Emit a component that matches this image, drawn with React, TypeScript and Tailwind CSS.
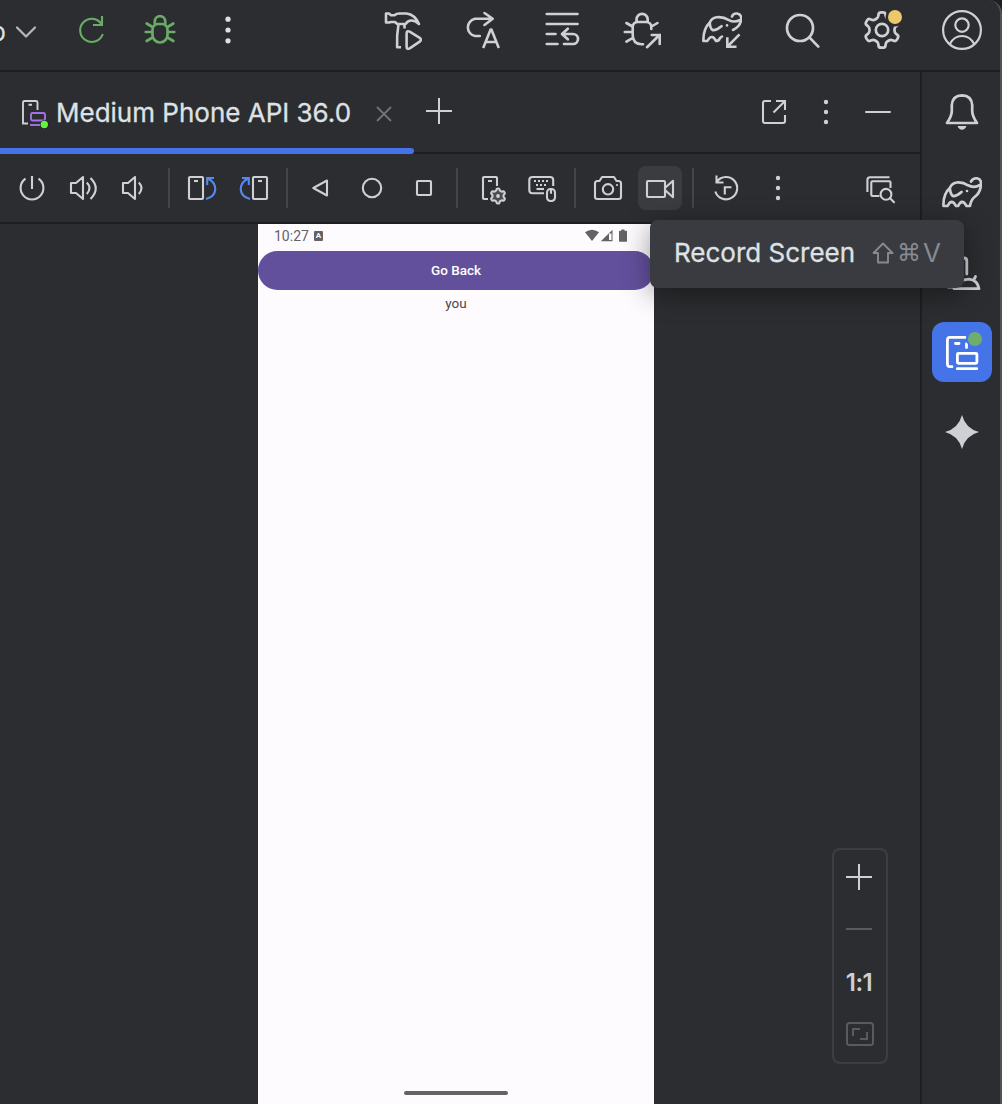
import React from "react";

type IconProps = { size?: 40 | 44; w?: number; className?: string; children: React.ReactNode };

function Icon({ size = 40, w = 2.1, className = "", children }: IconProps) {
  return (
    <svg
      viewBox={`0 0 ${size} ${size}`}
      width={size}
      height={size}
      fill="none"
      stroke="currentColor"
      strokeWidth={w}
      strokeLinecap="round"
      strokeLinejoin="round"
      className={`shrink-0 ${className}`}
    >
      {children}
    </svg>
  );
}

// Gear outline with softened corners: each corner becomes a quadratic curve.
function gearPath(cx: number, cy: number, outer: number, inner: number, teeth = 6) {
  const pts: [number, number][] = [];
  const step = 360 / teeth;
  for (let i = 0; i < teeth; i++) {
    const base = i * step - 90;
    const parts: [number, number][] = [
      [-step * 0.3, inner],
      [-step * 0.17, outer],
      [step * 0.17, outer],
      [step * 0.3, inner],
    ];
    for (const [da, r] of parts) {
      const a = ((base + da) * Math.PI) / 180;
      pts.push([cx + r * Math.cos(a), cy + r * Math.sin(a)]);
    }
  }
  const t = 0.36;
  const toward = (p: [number, number], q: [number, number]) =>
    `${(p[0] + (q[0] - p[0]) * t).toFixed(2)} ${(p[1] + (q[1] - p[1]) * t).toFixed(2)}`;
  const n = pts.length;
  return (
    pts
      .map((p, i) => {
        const prev = pts[(i + n - 1) % n];
        const next = pts[(i + 1) % n];
        return `${i === 0 ? "M" : "L"}${toward(p, prev)}Q${p[0].toFixed(2)} ${p[1].toFixed(2)} ${toward(p, next)}`;
      })
      .join("") + "Z"
  );
}

function Dots({ size, gap, r }: { size: 40 | 44; gap: number; r: number }) {
  const c = size / 2;
  return (
    <Icon size={size}>
      <g fill="currentColor" stroke="none">
        <circle cx={c} cy={c - gap} r={r} />
        <circle cx={c} cy={c} r={r} />
        <circle cx={c} cy={c + gap} r={r} />
      </g>
    </Icon>
  );
}

function Slot({ children }: { children: React.ReactNode }) {
  return <div className="flex h-full w-20 items-center justify-center">{children}</div>;
}

function TopBar() {
  return (
    <header className="flex h-[72px] shrink-0 border-b-2 border-[#1e1f22] text-[#ced0d6]">
      <div className="flex h-[60px] w-full justify-between">
        <div className="flex items-center">
          <div className="flex w-[58px] items-center">
            <span className="flex w-[6px] justify-end overflow-hidden pt-1 text-[26px] leading-[26px] text-[#dfe1e5]">p</span>
            <Icon w={2.2} className="text-[#b4b8bf]">
              <path d="M11 17.5L20 26.5L29 17.5" />
            </Icon>
          </div>
          <div className="flex w-[68px] justify-center text-[#6aab66]">
            <Icon>
              <path strokeLinecap="butt" strokeLinejoin="miter" d="M30.8 24A11.6 11.6 0 1 1 29.8 14.5M30 6V15H21" />
            </Icon>
          </div>
          <div className="flex w-[68px] justify-center text-[#6aab66]">
            <Icon w={2.7}>
              <path d="M14.8 14V11.3A5.2 5.2 0 0 1 25.2 11.3V14M12.5 19.5A5.5 5.5 0 0 1 18 14H22A5.5 5.5 0 0 1 27.5 19.5V25A7.5 7.5 0 0 1 12.5 25ZM6.7 13.5L12.5 17M5.7 22H12M6.7 31L12.5 27.5M33.3 13.5L27.5 17M34.3 22H28M33.3 31L27.5 27.5" />
            </Icon>
          </div>
          <div className="flex w-[68px] justify-center text-[#dfe1e5]">
            <Dots size={40} gap={10.8} r={2.6} />
          </div>
        </div>
        <div className="flex">
          <Slot>
            <Icon w={2.6}>
              <path d="M4 3.5H7L9 5.2H12.500Q14.500 3.500 17.500 3.500H24.500Q33 4.500 37 14Q32.500 10 28.700 10.500Q25.300 11 23.700 14H15.200L13 12H9L7 12.500H4Z" />
              <path d="M16.500 14.200Q14.600 25 15.100 37.200H19M22.500 14.500V18.500" strokeLinecap="butt" />
              <path d="M24.600 23.700Q24.600 20.200 27.700 21.700L37.700 27.800Q40 29.700 37.700 31.600L27.700 38.300Q24.600 39.800 24.600 36.500Z" />
            </Icon>
          </Slot>
          <Slot>
            <Icon w={2.6}>
              <path d="M17.800 26H13A8.750 8.750 0 0 1 13 8.800H30.500M22.500 3L30.700 8.800L22.500 15" />
              <path strokeLinecap="butt" d="M21.200 38L28.600 19.500H29.400L36.800 38M24 32H34" />
            </Icon>
          </Slot>
          <Slot>
            <Icon w={2.7}>
              <path d="M4.800 4H35.500M4.800 14H35.500M4.800 24H13.500M4.800 34H15.500M21 24H31A5 5 0 0 1 31 34H22M25.800 18.700L20 24L25.800 29.300" />
            </Icon>
          </Slot>
          <Slot>
            <Icon w={2.6}>
              <path d="M14.500 11.800V9.500A5.600 5.600 0 0 1 25.700 9.500V11.800M29.300 19V17.500Q29.300 12 24 12H16Q10.700 12 10.700 17.500V25Q10.700 33.800 19.500 34.300H21M4.400 13L10.500 16.500M2.800 22H10M4.400 31.700L10.500 28.200M35.500 13L29.500 16.500" />
              <path strokeLinejoin="miter" d="M25 37.200L37.500 25M29.800 25H37.700V34" />
            </Icon>
          </Slot>
          <Slot>
            <Icon w={2.6}>
              <path d="M30 6.500Q31 3.200 35 3.500Q39.500 4.200 39.200 9Q38.700 16 31 20M38.300 10Q32 13 27 10.200Q21 6.500 14.500 7.300Q9.500 8.200 7.800 12.500Q1 19 1.400 31H5.200L7.500 28Q10 26 12 28L14 31Q17 31 18 28L20 26.500M7.800 12.500Q8 19 11 20.300Q15 20 19.500 16.200" />
              <circle cx="25" cy="15.400" r="1.300" fill="currentColor" stroke="none" />
              <path strokeLinejoin="miter" strokeLinecap="butt" d="M37.500 24.300L25.500 36.500M25.300 27.300V36.700H34.500" />
            </Icon>
          </Slot>
          <Slot>
            <Icon w={2.700}>
              <circle cx="18" cy="18" r="13" />
              <path d="M27.400 27.400L36.300 36.600" />
            </Icon>
          </Slot>
          <Slot>
            <Icon w={2.700}>
              <path d={gearPath(20, 20, 18, 12.8)} />
              <circle cx="20" cy="20" r="6.200" />
              <circle cx="33" cy="7" r="9.500" fill="#2b2d30" stroke="none" />
              <circle cx="33" cy="7" r="7" fill="#edc76b" stroke="none" />
            </Icon>
          </Slot>
          <Slot>
            <Icon w={2.200}>
              <circle cx="20" cy="20" r="18.900" />
              <circle cx="20" cy="15.100" r="6.700" />
              <path d="M7.800 34Q12 26 20 26T32.200 34" />
            </Icon>
          </Slot>
        </div>
      </div>
    </header>
  );
}

function TabBar() {
  return (
    <div className="relative flex h-[82px] shrink-0 items-start justify-between border-b-2 border-[#1e1f22] text-[#ced0d6]">
      <div className="flex h-20 items-center">
        <div className="flex w-[413px] items-center pl-5">
          <svg width="30" height="32" viewBox="0 0 30 32" fill="none" strokeWidth="1.900" className="mt-0.5 shrink-0">
            <path d="M8 26.500H3V5.500Q3 4 4.500 4H16Q17.500 4 17.500 5.500V13M8.500 7.800H12" stroke="#ced0d6" />
            <rect x="11" y="16" width="14" height="7.500" rx="1.500" stroke="#a571e6" />
            <path d="M10 28H21" stroke="#a571e6" />
            <circle cx="24.300" cy="27.500" r="4.300" fill="#1e1f22" />
            <circle cx="24.300" cy="27.500" r="3.700" fill="#62f540" />
          </svg>
          <span className="ml-1.5 mt-0.5 w-[320px] whitespace-nowrap text-[26px] leading-8 text-[#dfe1e5] [-webkit-text-stroke:0.3px_#dfe1e5]">
            Medium Phone API 36.0
          </span>
          <svg width="16" height="16" viewBox="0 0 16 16" stroke="#6f737a" strokeWidth="1.800" className="mt-1 shrink-0">
            <path d="M1 1L15 15M15 1L1 15" />
          </svg>
        </div>
        <svg width="26" height="26" viewBox="0 0 26 26" stroke="currentColor" strokeWidth="2" className="-mt-0.5 ml-[13px]">
          <path d="M0 13H26M13 0V26" />
        </svg>
      </div>
      <div className="flex h-20 items-center gap-2 pr-5">
        <Icon size={44}>
          <path strokeLinecap="butt" strokeLinejoin="miter" d="M19 11H13Q11 11 11 13V31Q11 33 13 33H31Q33 33 33 31V25M24 11H33V20M33 11L21.500 22.500" />
        </Icon>
        <Dots size={44} gap={10} r={2.2} />
        <Icon size={44}>
          <path d="M10 22H34" />
        </Icon>
      </div>
      <div className="absolute -bottom-0.5 left-0 h-1.5 w-[414px] rounded-r-full bg-[#4573e8]" />
    </div>
  );
}

function Divider() {
  return <div className="mx-[10px] h-10 w-0.5 bg-[#43454a]" />;
}

function Toolbar() {
  return (
    <div className="flex h-[70px] shrink-0 items-center justify-between border-b-2 border-[#1e1f22] pl-[10px] pr-[18px] text-[#ced0d6]">
      <div className="flex items-center">
        <div className="flex gap-2">
          <Icon size={44}>
            <path strokeLinecap="butt" d="M15.500 12.700A11.400 11.400 0 1 0 28.500 12.700M22 10V23" />
          </Icon>
          <Icon size={44}>
            <path strokeLinecap="butt" d="M9 17H14L21 11V33L14 27H9ZM24.800 16.500Q30.200 22 24.800 28M28.500 12Q39 22.500 28.500 33" />
          </Icon>
          <Icon size={44}>
            <path strokeLinecap="butt" d="M9 17H14L21 11V33L14 27H9ZM24.800 16.500Q30.200 22 24.800 28" />
          </Icon>
        </div>
        <Divider />
        <div className="flex gap-2">
          <Icon size={44}>
            <rect x="9" y="11" width="14" height="22" rx="1" />
            <path strokeLinecap="butt" d="M14 15H18" />
            <path stroke="#5788f0" strokeLinecap="butt" strokeLinejoin="miter" d="M34 12H27.200V19M28 12.500C38 18 38 30 26 33" />
          </Icon>
          <Icon size={44}>
            <rect x="21" y="11" width="14" height="22" rx="1" />
            <path strokeLinecap="butt" d="M26 15H30" />
            <path stroke="#5788f0" strokeLinecap="butt" strokeLinejoin="miter" d="M10 12H16.800V19M16 12.500C6 18 6 30 18 33" />
          </Icon>
        </div>
        <Divider />
        <div className="flex gap-2">
          <Icon size={44}>
            <path d="M15.300 22L29 14.500V29.500Z" />
          </Icon>
          <Icon size={44}>
            <circle cx="22" cy="22" r="9.200" />
          </Icon>
          <Icon size={44}>
            <rect x="15" y="15" width="14" height="14" rx="1" />
          </Icon>
        </div>
        <Divider />
        <div className="flex gap-2">
          <Icon size={44}>
            <path strokeLinecap="butt" d="M20 33H16Q15 33 15 32V12Q15 11 16 11H28Q29 11 29 12V20M20 15H24" />
            <path d={gearPath(30, 30, 7.6, 5.6)} fill="#4a4c50" />
            <circle cx="30" cy="30" r="1.900" fill="currentColor" stroke="none" />
          </Icon>
          <Icon size={44}>
            <path strokeLinecap="butt" d="M24 27.300H12.500Q9.300 27.300 9.300 24V14Q9.300 11 12.500 11H30Q33.200 11 33.200 14V20" />
            <path strokeLinecap="butt" strokeDasharray="2 2" d="M14 15H28M16 19H27" />
            <path strokeLinecap="butt" d="M16.500 23H24" />
            <rect x="27" y="23" width="8" height="12" rx="3.500" />
            <path d="M31 23V27" />
          </Icon>
        </div>
        <Divider />
        <div className="flex gap-2">
          <Icon size={44}>
            <path d="M9 17.500Q9 15 11.500 15H13.500L16 11H28L30.500 15H32.500Q35 15 35 17.500V31Q35 33 32.500 33H11.500Q9 33 9 31Z" />
            <circle cx="22" cy="23.300" r="5.200" />
            <circle cx="31" cy="19" r="1.100" fill="currentColor" stroke="none" />
          </Icon>
          <div className="rounded-lg bg-[#3b3c40]">
            <Icon size={44}>
              <rect x="9" y="15" width="18" height="16" rx="1" />
              <path d="M27.500 21.500L35 14.800V31.200L27.500 24.500" />
            </Icon>
          </div>
        </div>
        <Divider />
        <div className="flex gap-2">
          <Icon size={44}>
            <path strokeLinecap="butt" strokeLinejoin="miter" d="M11.300 25.500A11.200 11.200 0 1 0 13 15.500M12.500 9.500V16.500H19.500" />
            <path strokeLinecap="butt" strokeLinejoin="miter" d="M20.800 28.500V21.300H27.500" />
          </Icon>
          <Dots size={44} gap={10} r={2.2} />
        </div>
      </div>
      <Icon size={44}>
        <path strokeLinecap="butt" d="M9.400 26V14Q9.400 11.300 12 11.300H31.500M21.500 30H14.500Q13.300 30 13.300 29V16.500Q13.300 15.300 14.500 15.300H31.500Q32.500 15.300 32.500 16.500V22" />
        <circle cx="28" cy="28.300" r="5.400" />
        <path d="M32 32.300L36 36.300" />
      </Icon>
    </div>
  );
}

function PhoneScreen() {
  return (
    <div className="ml-[258px] flex w-[396px] flex-col bg-[#fefbff] font-[Roboto,sans-serif]">
      <div className="flex h-[27px] items-center pb-1 pl-4 pr-[26px] text-[#646267]">
        <span className="w-10 text-[14px] leading-4">10:27</span>
        <span className="flex h-[10px] w-[9px] items-center justify-center rounded-[1px] bg-[#646267] text-[8px] font-bold leading-none text-white">A</span>
        <svg width="43" height="13" viewBox="0 0 43 13" fill="currentColor" className="ml-auto">
          <path d="M0 3.300Q7 -1.700 14 3.300L7 12Z" />
          <path fillRule="evenodd" d="M27.500 .8V12.200H15.800ZM26.500 4.500H24V11H26.500Z" />
          <path d="M36.300 1.800V.5H39.500V1.800H41.200Q42 1.800 42 2.600V12Q42 12.700 41.200 12.700H34.800Q34 12.700 34 12V2.600Q34 1.800 34.800 1.800Z" />
        </svg>
      </div>
      <button className="h-[39px] w-full rounded-full bg-[#63509d] text-[13.500px] font-medium text-white">Go Back</button>
      <p className="mt-[3px] text-center text-[13.500px] leading-5 text-[#47454b]">you</p>
      <div className="mx-auto mb-[9px] mt-auto h-1 w-[104px] rounded-full bg-[#646267]" />
    </div>
  );
}

function ZoomControls() {
  return (
    <div className="mb-10 ml-auto mr-8 mt-auto flex h-[216px] w-14 flex-col items-center rounded-lg border-2 border-[#3d3e3f] pt-[1px] text-[#ced0d6]">
      <div className="flex h-[52px] items-center pr-0.5">
        <svg width="26" height="26" viewBox="0 0 26 26" stroke="currentColor" strokeWidth="2">
          <path d="M0 13H26M13 0V26" />
        </svg>
      </div>
      <div className="flex h-[52px] items-center pr-0.5">
        <div className="h-0.5 w-[26px] bg-[#5a5b5d]" />
      </div>
      <div className="flex h-[52px] items-center pr-0.5 pt-[3px] text-[24px] font-semibold leading-none tracking-[-0.500px]">1:1</div>
      <div className="flex h-[52px] items-center pt-0.5">
        <svg width="28" height="24" viewBox="0 0 28 24" fill="none" stroke="#5a5b5d" strokeWidth="2">
          <rect x="1" y="1" width="26" height="22" rx="2.500" />
          <path d="M7 14V7H14M21 10V17H14" />
        </svg>
      </div>
    </div>
  );
}

function SideBar() {
  return (
    <aside className="flex w-[82px] shrink-0 flex-col border-l-2 border-[#1e1f22] text-[#ced0d6]">
      <div className="flex h-20 items-center justify-center">
        <Icon w={2.700}>
          <path d="M5 31Q9.800 24 9.800 19V13Q10.500 3.500 20 3.300Q29.500 3.500 30.200 13V19Q30.200 24 35 31Z" />
          <path d="M15.500 34H24.500Q23 37.800 20 37.800T15.500 34Z" fill="currentColor" stroke="none" />
        </Icon>
      </div>
      <div className="flex h-20 items-center justify-center">
        <Icon w={2.700}>
          <path d="M29 9.500Q31 5.800 35 6.300Q39.500 7.300 39 12.500Q38.500 21 32 25.500Q29 28 28 34H24.500L22.500 31Q20 29 18 31L16 34H14L12 31Q9.500 29 7.500 31L5.500 34H1.500Q1 22 7.800 16Q10 11 15 10.500Q21 10 26 13.300Q32 16.500 38 13M7.800 16Q8.500 23 11.300 24.200Q15 24 19.500 20" />
          <circle cx="25" cy="19" r="1.300" fill="currentColor" stroke="none" />
        </Icon>
      </div>
      <div className="flex h-20 items-center justify-center">
        <Icon w={2.800}>
          <path d="M12 35H6V6H22Q24.800 6 24.800 9V22M12 36.700H37Q35.500 28 27 27.200Q16 27.500 14 36.700M31.500 28.500L33.500 24.500" />
        </Icon>
      </div>
      <div className="flex h-20 items-center justify-center">
        <div className="flex h-[60px] w-[60px] items-center justify-center rounded-xl bg-[#4573e8] text-white">
          <Icon w={2.800}>
            <path d="M10 34.700H8Q5.400 34.700 5.400 32V8Q5.400 5.400 8 5.400H23M24.500 12V15.500M13.500 11.500H17" />
            <rect x="15.400" y="21.300" width="19.500" height="10" rx="1" />
            <path d="M15.300 36.700H34.700" />
            <circle cx="33" cy="7" r="9" fill="#4573e8" stroke="none" />
            <circle cx="33" cy="7" r="7" fill="#6fad6d" stroke="none" />
          </Icon>
        </div>
      </div>
      <div className="flex h-20 items-center justify-center">
        <Icon>
          <path fill="currentColor" stroke="none" d="M20 3Q23.500 16.500 37 20Q23.500 23.500 20 37Q16.500 23.500 3 20Q16.500 16.500 20 3Z" />
        </Icon>
      </div>
    </aside>
  );
}

function RecordTooltip() {
  return (
    <div className="absolute left-[650px] top-[220px] flex h-[68px] w-[314px] items-center whitespace-nowrap rounded-lg bg-[#393b40] pb-0.5 pl-6 text-[26px] leading-8 text-[#dfe1e5] shadow-[0_6px_28px_rgba(0,0,0,0.4)]">
      <span className="w-[198px] [-webkit-text-stroke:0.3px_#dfe1e5]">Record Screen</span>
      <span className="flex items-center text-[#868a91]">
        <svg width="22" height="22" viewBox="0 0 22 22" fill="none" stroke="currentColor" strokeWidth="1.900" strokeLinejoin="round" aria-label="⇧" className="mr-[3px]">
          <path d="M11 1.500L20.500 11H16V20.500H6V11H1.500Z" />
        </svg>
        <span className="w-[26px] font-['DejaVu_Sans',sans-serif] text-[24px]">⌘</span>
        <span>V</span>
      </span>
    </div>
  );
}

export default function App() {
  return (
    <div className="h-[1104px] w-[1002px] overflow-hidden bg-[#1e1f22] font-[Inter,sans-serif]">
      <div className="relative flex h-full w-full flex-col overflow-hidden rounded-tr-[14px] border-r-2 border-[#525355] bg-[#2b2d30]">
        <div className="-mr-0.5 flex min-h-0 grow flex-col">
          <TopBar />
          <div className="flex min-h-0 grow">
            <main className="flex w-[920px] shrink-0 flex-col">
              <TabBar />
              <Toolbar />
              <div className="flex min-h-0 grow">
                <PhoneScreen />
                <ZoomControls />
              </div>
            </main>
            <SideBar />
          </div>
        </div>
        <RecordTooltip />
      </div>
    </div>
  );
}
